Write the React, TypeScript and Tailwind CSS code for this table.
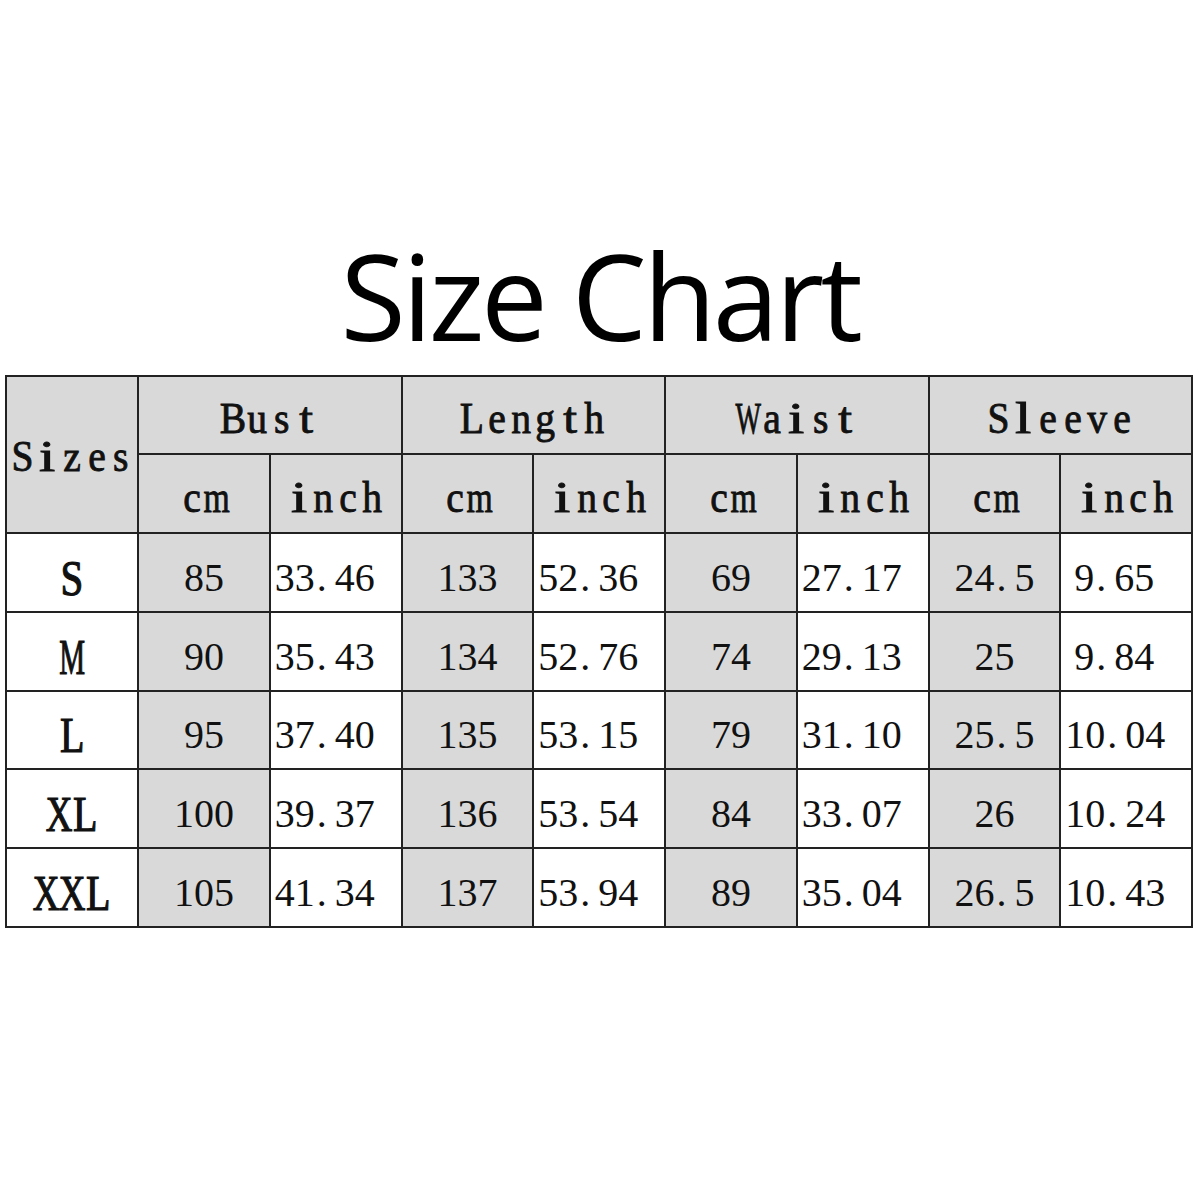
import React from "react";

const headerScale: Record<string, string> = {
  W: "scale-x-[0.6]",
  m: "scale-x-[0.75]",
  M: "scale-x-[0.6]",
  i: "scale-x-[1.3]",
  l: "scale-x-[1.3]",
  t: "scale-x-[1.1]",
};

function HeadText({ text }: { text: string }) {
  return (
    <span className="inline-flex font-['Liberation_Serif',serif] font-normal text-[45px] leading-none text-[#111] [-webkit-text-stroke:0.9px_#111]">
      {[...text].map((c, i) => (
        <span key={i} className="inline-flex w-[24.5px] justify-center">
          <span className={`inline-block ${headerScale[c] ?? "scale-x-[0.88]"}`}>{c}</span>
        </span>
      ))}
    </span>
  );
}

function NumText({ text }: { text: string }) {
  return (
    <span className="inline-flex whitespace-pre font-['Liberation_Serif',serif] font-normal text-[40px] leading-none text-[#111]">
      {[...text].map((c, i) =>
        c === " " ? (
          <span key={i} className="inline-block w-[9px] overflow-hidden">
            {"\u00a0"}
          </span>
        ) : c === "." ? (
          <span key={i} className="inline-flex w-[20px] justify-start pl-[2px]">
            .
          </span>
        ) : (
          <span key={i} className="inline-flex w-[20px] justify-center">
            {c}
          </span>
        )
      )}
    </span>
  );
}

const letterScale: Record<string, string> = {
  S: "scale-x-[0.82]",
  M: "scale-x-[0.58]",
  L: "scale-x-[0.8]",
  X: "scale-x-[0.74]",
};

function SizeLabel({ text }: { text: string }) {
  return (
    <span className="inline-flex font-['Liberation_Serif',serif] font-normal text-[50px] leading-none text-[#111] [-webkit-text-stroke:1.2px_#111]">
      {[...text].map((c, i) => (
        <span key={i} className="inline-flex w-[26px] justify-center">
          <span className={`inline-block ${letterScale[c]}`}>{c}</span>
        </span>
      ))}
    </span>
  );
}

const rows: [string, string[]][] = [
  ["S", ["85", "33.46", "133", "52.36", "69", "27.17", "24.5", " 9.65"]],
  ["M", ["90", "35.43", "134", "52.76", "74", "29.13", "25", " 9.84"]],
  ["L", ["95", "37.40", "135", "53.15", "79", "31.10", "25.5", "10.04"]],
  ["XL", ["100", "39.37", "136", "53.54", "84", "33.07", "26", "10.24"]],
  ["XXL", ["105", "41.34", "137", "53.94", "89", "35.04", "26.5", "10.43"]],
];

const groups = ["Bust", "Length", "Waist", "Sleeve"];

export default function App() {
  return (
    <div className="w-[1200px] h-[1200px] bg-white flex flex-col items-center">
      <h1 className="pt-[236px] font-['Open_Sans',sans-serif] font-normal text-[119px] leading-none tracking-[-3.5px] text-black">
        Size Chart
      </h1>
      <table className="mt-[20px] ml-[-2px] w-[1186px] table-fixed border-collapse border-2 border-[#222]">
        <colgroup>
          <col className="w-[132px]" />
          {Array.from({ length: 8 }).map((_, i) => (
            <col key={i} className="w-[131.75px]" />
          ))}
        </colgroup>
        <thead>
          <tr className="h-[78px] bg-[#d9d9d9]">
            <th rowSpan={2} className="border-2 border-[#222] p-0 text-center align-middle font-normal">
              <span className="relative top-[2px]">
                <HeadText text="Sizes" />
              </span>
            </th>
            {groups.map((g) => (
              <th key={g} colSpan={2} className="border-2 border-[#222] p-0 text-center align-middle font-normal">
                <span className="relative top-[3px]">
                  <HeadText text={g} />
                </span>
              </th>
            ))}
          </tr>
          <tr className="h-[79px] bg-[#d9d9d9]">
            {groups.map((g) => (
              <React.Fragment key={g}>
                <th className="border-2 border-[#222] p-0 text-center align-middle font-normal">
                  <span className="relative top-[4px]">
                    <HeadText text="cm" />
                  </span>
                </th>
                <th className="border-2 border-[#222] p-0 text-center align-middle font-normal">
                  <span className="relative top-[4px]">
                    <HeadText text="inch" />
                  </span>
                </th>
              </React.Fragment>
            ))}
          </tr>
        </thead>
        <tbody>
          {rows.map(([size, vals], ri) => (
            <tr key={size} className={ri % 3 === 2 ? "h-[78px]" : "h-[79px]"}>
              <td className="border-2 border-[#222] bg-white p-0 text-center align-middle">
                <span className="relative top-[5px]">
                  <SizeLabel text={size} />
                </span>
              </td>
              {vals.map((v, i) =>
                i % 2 === 0 ? (
                  <td key={i} className="border-2 border-[#222] bg-[#d9d9d9] p-0 text-center align-middle">
                    <span className="relative top-[5px]">
                      <NumText text={v} />
                    </span>
                  </td>
                ) : (
                  <td key={i} className="border-2 border-[#222] bg-white p-0 pl-[4px] text-left align-middle">
                    <span className="relative top-[5px]">
                      <NumText text={v} />
                    </span>
                  </td>
                )
              )}
            </tr>
          ))}
        </tbody>
      </table>
    </div>
  );
}
